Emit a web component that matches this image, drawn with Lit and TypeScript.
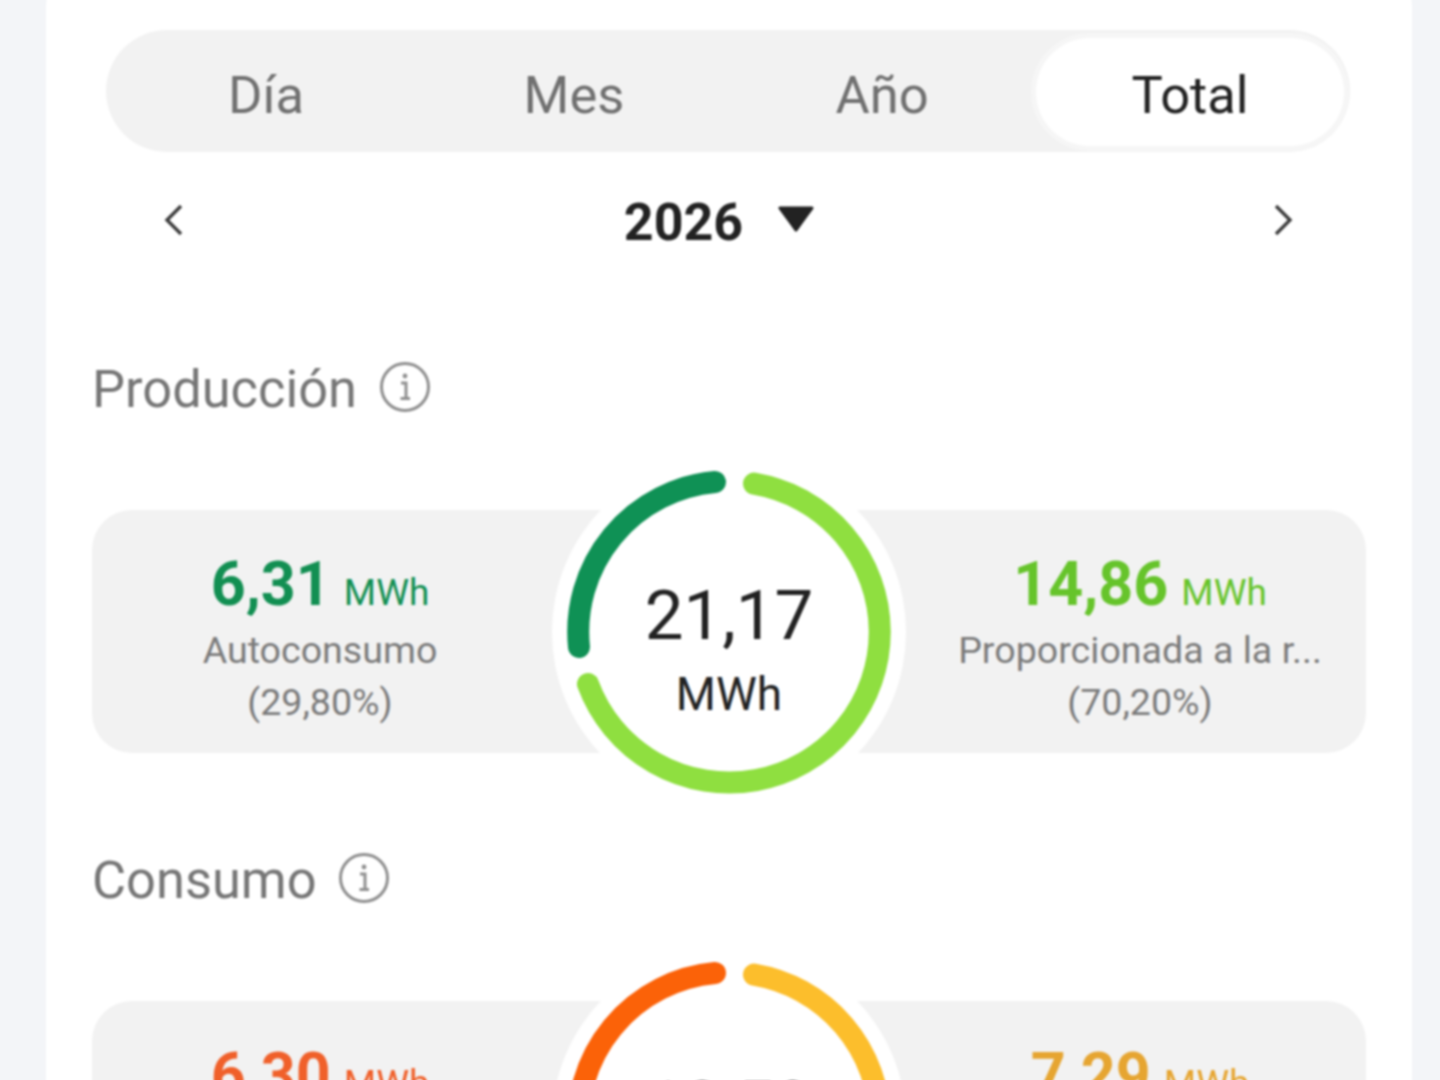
import { LitElement, html, css, svg } from "lit";
import { customElement } from "lit/decorators.js";

const C = 177;
const R = 150.5;
const arc = (a: number[], b: number[], clockwise: number, large: number, color: string) =>
  svg`<path d="M${C + a[0]} ${C + a[1]} A${R} ${R} 0 ${large} ${clockwise} ${C + b[0]} ${C + b[1]}" fill="none" stroke=${color} stroke-width="22" stroke-linecap="round"/>`;

const SECTIONS = [
  {
    title: "Producción",
    total: "21,17",
    left: { value: "6,31", label: "Autoconsumo", pct: "(29,80%)", color: "#128f52" },
    right: { value: "14,86", label: "Proporcionada a la r...", pct: "(70,20%)", color: "#66c42b" },
    arcA: "#0f9155",
    arcB: "#8fdf40",
  },
  {
    title: "Consumo",
    total: "13,59",
    left: { value: "6,30", label: "", pct: "", color: "#f0602a" },
    right: { value: "7,29", label: "", pct: "", color: "#e6a531" },
    arcA: "#fb6208",
    arcB: "#fcbe2c",
  },
];

@customElement("app-root")
export class AppRoot extends LitElement {
  static styles = css`
    :host {
      display: block;
      height: 1080px;
      overflow: hidden;
      background: #f3f5f8;
      font-family: Roboto, "Liberation Sans", sans-serif;
    }
    .card {
      box-sizing: border-box;
      width: 1366px;
      margin: -30px 0 0 46px;
      padding: 60px 46px 0;
      height: 1200px;
      background: #fff;
      border-radius: 36px;
      filter: blur(0.8px);
    }
    .tabs {
      display: grid;
      grid-template-columns: repeat(4, 308px);
      box-sizing: border-box;
      width: 1244px;
      height: 122px;
      margin-left: 14px;
      padding: 8px 6px 6px;
      background: #f2f2f2;
      border-radius: 61px;
    }
    .tab {
      display: flex;
      align-items: center;
      justify-content: center;
      box-sizing: border-box;
      font-size: 52.5px;
      color: #707070;
      border-radius: 54px;
      padding-top: 6px;
    }
    .tab.on {
      background: #fff;
      color: #222;
      box-shadow: 0 0 0 5px #f6f6f6;
    }
    .nav {
      display: flex;
      align-items: center;
      justify-content: space-between;
      height: 68px;
      margin: 34px 0 104px;
      padding: 0 71px 0 70px;
    }
    .chev {
      width: 24px;
      height: 36px;
      fill: none;
      stroke: #3c3c3c;
      stroke-width: 3.4;
    }
    .year {
      display: flex;
      align-items: center;
      gap: 34px;
      margin-right: 18px;
      font-size: 52px;
      font-weight: 700;
      color: #222;
    }
    .year span {
      padding-top: 4px;
    }
    .tri {
      width: 38px;
      height: 28px;
      fill: #222;
      stroke: #222;
      stroke-width: 3;
      stroke-linejoin: round;
      margin-top: -2px;
    }
    .head {
      display: flex;
      align-items: center;
      gap: 21.5px;
      box-sizing: border-box;
      height: 60px;
      padding-top: 2px;
      margin-bottom: 92px;
      font-size: 52.4px;
      color: #767676;
    }
    .info {
      width: 52px;
      height: 52px;
      margin-top: -4px;
      fill: none;
      stroke: #8f8f8f;
    }
    .panel {
      display: flex;
      align-items: center;
      height: 243px;
      margin-bottom: 96px;
      background: #f2f2f2;
      border-radius: 40px;
    }
    .stat {
      flex: none;
      width: 460px;
      box-sizing: border-box;
      align-self: stretch;
      padding-top: 43px;
      text-align: center;
      font-size: 37.6px;
      line-height: 52px;
      color: #7b7b7b;
    }
    .stat.l {
      padding-right: 4px;
    }
    .stat.r {
      padding-left: 8px;
    }
    .val {
      height: 71px;
      font-size: 61px;
      line-height: 62px;
      font-weight: 700;
      white-space: nowrap;
    }
    .val small {
      font-size: 37px;
      font-weight: 400;
      margin-left: -2px;
    }
    .line {
      height: 52px;
      white-space: nowrap;
    }
    .ring {
      position: relative;
      flex: none;
      width: 354px;
      height: 354px;
      margin: -56px 0;
      border-radius: 50%;
      background: #fff;
    }
    .ring svg {
      position: absolute;
      inset: 0;
    }
    .center {
      position: absolute;
      inset: 0;
      box-sizing: border-box;
      display: flex;
      flex-direction: column;
      align-items: center;
      justify-content: center;
      color: #222;
      padding-top: 32px;
    }
    .big {
      font-size: 69px;
      line-height: 84px;
    }
    .unit {
      font-size: 46px;
      line-height: 56px;
      margin-top: 8px;
    }
  `;

  private stat(s: { value: string; label: string; pct: string; color: string }, side: string) {
    return html`<div class="stat ${side}">
      <div class="val" style="color:${s.color}">${s.value} <small>MWh</small></div>
      <div class="line">${s.label}</div>
      <div class="line">${s.pct}</div>
    </div>`;
  }

  render() {
    return html`<div class="card">
      <div class="tabs">
        <div class="tab">Día</div>
        <div class="tab">Mes</div>
        <div class="tab">Año</div>
        <div class="tab on">Total</div>
      </div>
      <div class="nav">
        <svg class="chev" viewBox="0 0 24 36"><path d="M19 4 L5 18 L19 32" /></svg>
        <div class="year">
          <span>2026</span>
          <svg class="tri" viewBox="0 0 38 28"><path d="M3 3 H35 L19 25 Z" /></svg>
        </div>
        <svg class="chev" viewBox="0 0 24 36"><path d="M5 4 L19 18 L5 32" /></svg>
      </div>
      ${SECTIONS.map(
        (s) => html`
          <div class="head">
            ${s.title}
            <svg class="info" viewBox="0 0 52 52">
              <circle cx="26" cy="26" r="23.5" stroke-width="3" />
              <circle cx="26" cy="15" r="2.4" fill="#8f8f8f" stroke="none" />
              <path d="M22 22 H27 V37 M21.5 37.5 H31" stroke-width="3" />
            </svg>
          </div>
          <div class="panel">
            ${this.stat(s.left, "l")}
            <div class="ring">
              <svg width="354" height="354" viewBox="0 0 354 354">
                ${arc([-14, -150], [-150, 15], 0, 0, s.arcA)}
                ${arc([25, -148.4], [-141, 52], 1, 1, s.arcB)}
              </svg>
              <div class="center">
                <div class="big">${s.total}</div>
                <div class="unit">MWh</div>
              </div>
            </div>
            ${this.stat(s.right, "r")}
          </div>
        `
      )}
    </div>`;
  }
}
